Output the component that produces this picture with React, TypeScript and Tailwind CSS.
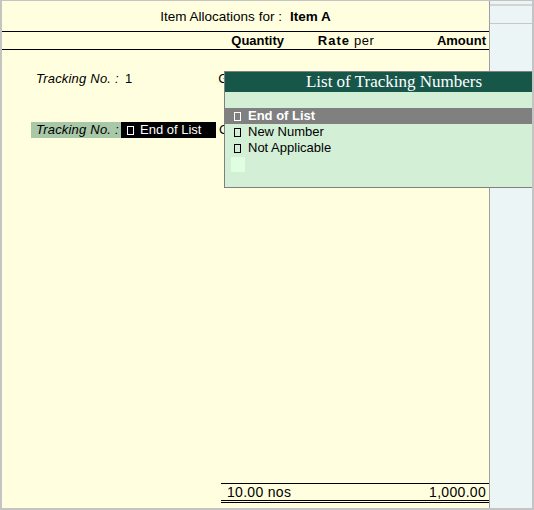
import React from "react";

const Sq = ({ className = "" }: { className?: string }) => (
  <span className={`inline-block w-[7px] h-[9px] border border-current align-middle ${className}`} />
);

export default function App() {
  return (
    <div
      className="relative w-[534px] h-[510px] overflow-hidden border-t border-l-2 border-r-2 border-b-2 border-[#c4c4c4] flex text-[13px] leading-[16px] text-black"
      style={{ fontFamily: '"Liberation Sans", Arial, sans-serif' }}
    >
      {/* main panel */}
      <div className="w-[487px] h-full bg-[#ffffdf] flex flex-col">
        <div className="h-[31px] border-b border-black flex items-center justify-center pt-[1px] text-[13.5px]">
          <span>Item Allocations for :</span>
          <span className="font-bold ml-[8px]">Item A</span>
        </div>
        <div className="h-[18px] border-b border-black flex items-center">
          <div className="w-[282px] text-right font-bold">Quantity</div>
          <div className="w-[66px] text-right font-bold tracking-[1px]">Rate</div>
          <div className="ml-[4px] text-[13px] tracking-[0.5px]">per</div>
          <div className="flex-1 text-right font-bold pr-[3px]">Amount</div>
        </div>
        <div className="flex-1 flex flex-col">
          <div className="mt-[21px] h-[16px] flex items-center">
            <span className="ml-[34px] italic w-[89px] tracking-[0.2px]">Tracking No. :</span>
            <span>1</span>
            <span className="ml-[86px]">G</span>
          </div>
          <div className="mt-[35px] h-[16px] flex items-center">
            <div className="ml-[29px] w-[90px] h-full bg-[#a8c8a8] pl-[5px] italic flex items-center tracking-[0.2px]">Tracking No. :</div>
            <div className="w-[95px] h-full bg-black text-white flex items-center pl-[6px]">
              <Sq />
              <span className="ml-[6px]">End of List</span>
            </div>
            <span className="ml-[3px]">G</span>
          </div>
        </div>
        <div className="ml-[219px] border-t border-black h-[16px] flex items-center justify-between pl-[6px] pr-[3px] box-content text-[14px]">
          <span className="tracking-[0.3px]">10.00 nos</span>
          <span className="tracking-[0.3px]">1,000.00</span>
        </div>
        <div className="ml-[219px] border-t-[3px] border-double border-black h-[5px] box-content" />
      </div>
      {/* divider */}
      <div className="w-px h-full bg-[#a0a0a0]" />
      {/* side panel */}
      <div className="w-[42px] h-full bg-[#ebf5f5] flex flex-col">
        <div className="mt-[3px] h-[2px] bg-[#d4d4d4]" />
        <div className="mt-[17px] h-px bg-[#c8c8c8]" />
      </div>

      {/* popup */}
      <div className="absolute left-[222px] top-[70px] w-[340px] h-[117px] border border-[#808080] bg-[#d3f0d7] flex flex-col">
        <div
          className="h-[20px] bg-[#17574a] text-white text-[17px] leading-[20px] text-center"
          style={{ fontFamily: '"Liberation Serif", "Times New Roman", serif' }}
        >
          List of Tracking Numbers
        </div>
        <div className="h-[16px]" />
        <div className="h-[16px] bg-[#808080] text-white font-bold flex items-center pl-[9px]">
          <Sq />
          <span className="ml-[7px]">End of List</span>
        </div>
        <div className="h-[16px] flex items-center pl-[9px]">
          <Sq />
          <span className="ml-[7px]">New Number</span>
        </div>
        <div className="h-[16px] flex items-center pl-[9px]">
          <Sq />
          <span className="ml-[7px]">Not Applicable</span>
        </div>
        <div className="h-[16px] flex items-center pl-[6px]">
          <div className="w-[14px] h-[15px] bg-[#e0ffe0]" />
        </div>
      </div>
    </div>
  );
}
